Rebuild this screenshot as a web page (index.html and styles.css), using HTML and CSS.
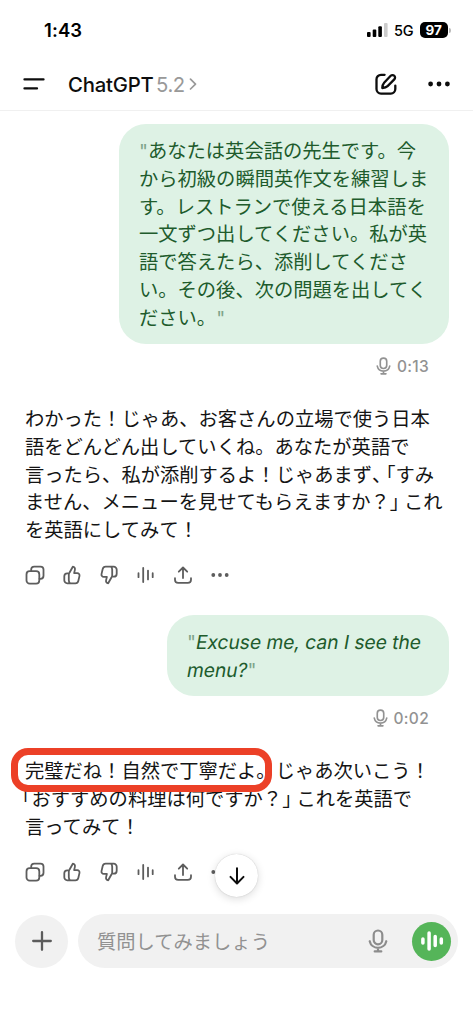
FILE: index.html
```html
<!DOCTYPE html>
<html lang="ja">
<head>
<meta charset="utf-8">
<title>ChatGPT</title>
<link rel="stylesheet" href="styles.css">
</head>
<body>
<svg class="defs" width="0" height="0" aria-hidden="true">
  <symbol id="copy" viewBox="0 0 20 20"><rect x="1.5" y="6.2" width="12.8" height="12.4" rx="3.2"/><path d="M6.2 5.8V4.6a3 3 0 0 1 3-3h6.300a3 3 0 0 1 3 3v6.200a3 3 0 0 1-3 3h-1"/></symbol>
  <symbol id="thumb" viewBox="0 0 20 20"><path d="M6.800 8.300H5.300a3 3 0 0 0-3 3v4a3 3 0 0 0 3 3h8.100a3 3 0 0 0 2.900-2.300l1.200-5.100a2.300 2.300 0 0 0-2.200-2.800h-3.200l.8-3.200c.4-1.700-.4-3-2.100-3.200L7.600 7.500q-.8 1-.8 2.300v5.500q0 1.700 1.200 3"/></symbol>
  <symbol id="wave" viewBox="0 0 20 20"><path d="M2.500 8.200v4M7.200 2.900v14.200M12 5.600v8.800M16.700 8.200v4"/></symbol>
  <symbol id="share" viewBox="0 0 20 20"><path d="M10 13V2.800M5.800 6.700 10 2.500l4.200 4.200M2 13.200v1.500a3.200 3.200 0 0 0 3.200 3.200h9.600a3.200 3.200 0 0 0 3.200-3.200v-1.500"/></symbol>
  <symbol id="dots" viewBox="0 0 20 20"><g fill="currentColor" stroke="none"><circle cx="3.300" cy="10" r="1.900"/><circle cx="10" cy="10" r="1.900"/><circle cx="16.700" cy="10" r="1.900"/></g></symbol>
  <symbol id="mic" viewBox="0 0 20 24"><rect x="5.700" y="1.500" width="8.600" height="13.800" rx="4.300"/><path d="M1.700 12.200a8.500 8.500 0 0 0 16.600 0M10 18.900v3M6.700 22.400h6.600"/></symbol>
</svg>
<div class="screen">
  <div class="status">
    <span class="clock">1:43</span>
    <div class="signal-group">
      <svg class="signal" viewBox="0 0 21 14"><rect x="0" y="9" width="3.600" height="5" rx="1"/><rect x="5.700" y="6.500" width="3.600" height="7.500" rx="1"/><rect x="11.300" y="3.300" width="3.600" height="10.700" rx="1"/><rect x="17" y="0" width="3.600" height="14" rx="1" fill="#ccc"/></svg>
      <span class="network">5G</span>
      <span class="battery">97</span><i class="battery-tip"></i>
    </div>
  </div>
  <header class="header">
    <svg class="menu" viewBox="0 0 22 14"><path d="M1.500 2.400h19M1.500 11.400h12.500"/></svg>
    <h1 class="title">ChatGPT</h1><span class="version">5.2</span>
    <svg class="chevron" viewBox="0 0 8 12"><path d="m1.500 1.200 5 4.900-5 4.900"/></svg>
    <svg class="compose" viewBox="0 0 24 24"><path d="M10.600 2.800H7a4.500 4.500 0 0 0-4.500 4.500v9.800A4.500 4.500 0 0 0 7 21.600h9.800a4.500 4.500 0 0 0 4.500-4.500v-3.500"/><path d="M8.300 16c.1-2.600.5-3.900 1.800-5.300l6.600-6.900a2.500 2.500 0 0 1 3.600 3.600l-6.700 6.700C12.200 15.500 10.900 15.900 8.300 16Z"/></svg>
    <svg class="more" viewBox="0 0 22 6"><circle cx="2.600" cy="3" r="2.400"/><circle cx="11" cy="3" r="2.400"/><circle cx="19.400" cy="3" r="2.400"/></svg>
  </header>
  <main class="chat">
    <div class="bubble bubble-ja">
      <p><q>"</q>あなたは英会話の先生です。今</p>
      <p>から初級の瞬間英作文を練習しま</p>
      <p>す。レストランで使える日本語を</p>
      <p>一文ずつ出してください。私が英</p>
      <p>語で答えたら、添削してくださ</p>
      <p>い。その後、次の問題を出してく</p>
      <p>ださい。<q>"</q></p>
    </div>
    <div class="duration"><svg><use href="#mic"/></svg><span>0:13</span></div>
    <div class="reply reply-first">
      <p>わかった！じゃあ、お客さんの立場で使う日本</p>
      <p>語をどんどん出していくね。あなたが英語で</p>
      <p>言ったら、私が添削するよ！じゃあまず<span class="comma">、</span>「すみ</p>
      <p>ません、メニューを見せてもらえますか？<span class="close">」</span>これ</p>
      <p>を英語にしてみて！</p>
    </div>
    <div class="actions">
      <svg><use href="#copy"/></svg><svg><use href="#thumb"/></svg><svg class="down"><use href="#thumb"/></svg><svg><use href="#wave"/></svg><svg><use href="#share"/></svg><svg><use href="#dots"/></svg>
    </div>
    <div class="bubble bubble-en">
      <p><q>"</q><span class="slant">Excuse me, can I see the</span></p>
      <p><span class="slant">menu?</span><q>"</q></p>
    </div>
    <div class="duration"><svg><use href="#mic"/></svg><span>0:02</span></div>
    <div class="reply reply-second">
      <p>完璧だね！自然で丁寧だよ。じゃあ次いこう！</p>
      <p><span class="open">「</span>おすすめの料理は何ですか？<span class="close">」</span>これを英語で</p>
      <p>言ってみて！</p>
      <div class="highlight"></div>
    </div>
    <div class="actions">
      <svg><use href="#copy"/></svg><svg><use href="#thumb"/></svg><svg class="down"><use href="#thumb"/></svg><svg><use href="#wave"/></svg><svg><use href="#share"/></svg><svg><use href="#dots"/></svg>
    </div>
    <button class="scroll" aria-label="下へ"><svg viewBox="0 0 20 20"><path d="M10 2.200v15M3.500 10.900l6.500 6.600 6.500-6.600"/></svg></button>
  </main>
  <footer class="composer">
    <button class="plus" aria-label="追加"><svg viewBox="0 0 20 20"><path d="M10 1.200v17.600M1.200 10h17.600"/></svg></button>
    <div class="input">
      <span class="placeholder">質問してみましょう</span>
      <svg class="input-mic"><use href="#mic"/></svg>
      <button class="voice" aria-label="音声"><svg viewBox="0 0 24 24"><path d="M2.900 9.900v4.200M9.100 3.900v16.200M15.200 7.500v9M21.300 9.900v4.200"/></svg></button>
    </div>
  </footer>
</div>
</body>
</html>
```
FILE: styles.css
```css
* { box-sizing: border-box; }
body { margin: 0; background: #fff; color: #141414; font-family: Inter, "Noto Sans CJK JP", sans-serif; }
p, h1 { margin: 0; }
button { border: 0; padding: 0; display: grid; place-items: center; }
svg { display: block; fill: none; stroke: currentColor; stroke-linecap: round; stroke-linejoin: round; flex: none; }
q { quotes: none; }
q::before, q::after { content: none; }
.defs { position: absolute; }
.screen { width: 473px; height: 1024px; display: flex; flex-direction: column; overflow: hidden; }

.status { height: 60px; padding: 0 22.500px 0 44px; display: flex; align-items: center; justify-content: space-between; color: #000; }
.clock { font-size: 18.500px; font-weight: 600; letter-spacing: .1px; }
.signal-group { display: flex; align-items: center; }
.signal { width: 21px; height: 14px; fill: #000; stroke: none; }
.network { margin-left: 6.500px; width: 20px; font-size: 14.500px; font-weight: 500; letter-spacing: -.3px; }
.battery { margin-left: 6px; width: 27.500px; height: 16px; border-radius: 5px; background: #000; color: #fff; font-size: 13.500px; line-height: 16px; font-weight: 700; text-align: center; }
.battery-tip { width: 2px; height: 5px; margin-left: 1px; border-radius: 0 2px 2px 0; background: #bbb; }

.header { height: 51px; padding: 0 23px 2px; display: flex; align-items: center; border-bottom: 1px solid #f0f0f0; color: #0d0d0d; }
.menu { width: 22px; height: 14px; stroke-width: 2.300; }
.title { margin-left: 23px; width: 88px; font-size: 20.300px; font-weight: 500; letter-spacing: -.2px; white-space: nowrap; }
.version { width: 32px; color: #999; font-size: 20.300px; letter-spacing: -.4px; }
.chevron { width: 8px; height: 12px; margin-left: 1px; color: #999; stroke-width: 1.700; }
.compose { width: 24px; height: 24px; margin-left: 176.500px; stroke-width: 2.300; }
.more { width: 22px; height: 6px; margin-left: auto; fill: currentColor; stroke: none; }

.chat { position: relative; height: 794px; padding-top: 13px; display: flex; flex-direction: column; }
.chat p { font-size: 19.300px; line-height: 27.800px; white-space: nowrap; text-spacing-trim: space-all; }
.bubble { align-self: flex-end; margin-right: 24px; border-radius: 27px; background: #def2e5; color: #205b2c; flex: none; }
.bubble q { color: #7ea58a; }
.bubble-ja { width: 330px; height: 220px; padding: 14px 20px 10px; }
.bubble-ja q { display: inline-block; width: 9px; }
.bubble-en { width: 282px; height: 81px; padding: 14px 20px 10px; }
.slant { display: inline-block; transform: skewX(-10deg); letter-spacing: -.06px; }
.duration { height: 24px; margin-top: 10px; margin-right: 44px; display: flex; align-items: center; align-self: flex-end; gap: 6px; color: #929292; font-size: 15.500px; font-weight: 500; letter-spacing: .3px; }
.duration svg { width: 15px; height: 18px; stroke-width: 2.200; }
.reply { position: relative; padding: 2px 0 0 25px; flex: none; }
.reply-first { height: 139px; margin-top: 26px; }
.reply-second { height: 84px; margin-top: 26px; }
.comma { letter-spacing: -15.200px; }
.close { letter-spacing: -5px; }
.open { margin-left: -12.800px; }
.actions { height: 20px; margin-top: 22px; padding-left: 25px; display: flex; gap: 17px; color: #5d5d5d; flex: none; }
.actions svg { width: 20px; height: 20px; stroke-width: 1.800; }
.actions .down { transform: rotate(180deg); }
.actions + .bubble { margin-top: 30px; }
.highlight { position: absolute; left: 11px; top: -8.500px; width: 261px; height: 44px; border: 7px solid #ec4027; border-radius: 17px; }
.scroll { position: absolute; left: 215px; top: 743px; width: 43px; height: 43px; border-radius: 50%; background: #fff; color: #0d0d0d; box-shadow: 0 0 1px rgba(0,0,0,.25), 0 2px 9px rgba(0,0,0,.14); }
.scroll svg { width: 20px; height: 20px; stroke-width: 2; }

.composer { margin-top: 9px; padding: 0 15px; display: flex; align-items: center; gap: 10px; }
.plus { width: 53px; height: 53px; border-radius: 50%; background: #f1f1f1; color: #5c5c5c; }
.plus svg { width: 20px; height: 20px; stroke-width: 2.300; }
.input { width: 380px; height: 54px; padding: 0 7px 0 19px; border-radius: 27px; background: #f1f1f1; display: flex; align-items: center; flex: none; }
.placeholder { flex: 1; color: #929292; font-size: 19.300px; white-space: nowrap; }
.input-mic { width: 20px; height: 24px; color: #8c8c8c; stroke-width: 2.200; margin-right: 24px; }
.voice { width: 39px; height: 39px; border-radius: 50%; background: #55b559; color: #fff; }
.voice svg { width: 24px; height: 24px; stroke-width: 3.500; }
```
